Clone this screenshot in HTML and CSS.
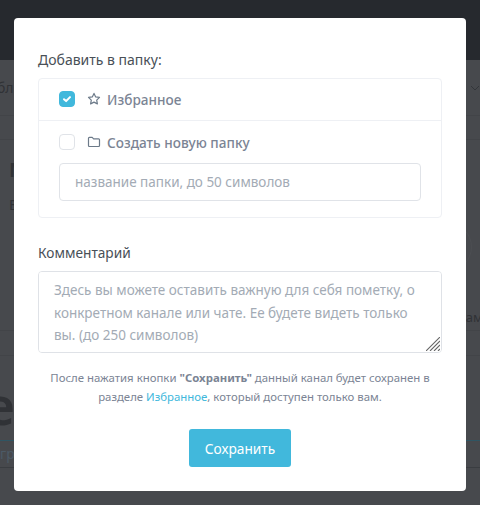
FILE: index.html
```html
<!DOCTYPE html>
<html lang="ru">
<head>
    <meta charset="UTF-8">
    <meta name="viewport" content="width=device-width, initial-scale=1">
    <title>Добавить в папку</title>
    <link rel="stylesheet" href="styles.css">
</head>
<body>
    <!-- Страница под затемнением -->
    <div class="page">
        <div class="page-header"></div>
        <div class="page-tabs">
            <span>бл</span>
            <svg class="page-caret" width="10" height="6" viewBox="0 0 10 6"><path d="M1 1l4 4 4-4" fill="none" stroke="#33363a" stroke-width="1"/></svg>
        </div>
        <div class="page-row"></div>
        <div class="page-title">М</div>
        <div class="page-sub">В</div>
        <div class="page-side"><span>ам</span></div>
        <div class="page-strip"></div>
        <div class="page-big">е</div>
        <div class="page-link">гру</div>
        <div class="page-circle"></div>
    </div>

    <div class="overlay">
        <div class="modal">
            <div class="field-title">Добавить в папку:</div>
            <div class="folder-box">
                <div class="folder-item">
                    <label class="folder-row">
                        <span class="check checked">
                            <svg width="10" height="8" viewBox="0 0 10 8"><path d="M2 4.200l2.100 1.900 3.900-4" fill="none" stroke="#fff" stroke-width="2" stroke-linecap="round" stroke-linejoin="round"/></svg>
                        </span>
                        <svg class="folder-icon" width="14" height="14" viewBox="0 0 14 14"><path d="M7 1.400l1.700 3.500 3.800.5-2.800 2.700.7 3.800L7 10.100l-3.400 1.800.7-3.800-2.800-2.700 3.800-.5z" fill="none" stroke="#6c7a89" stroke-width="1.200" stroke-linejoin="round"/></svg>
                        <span>Избранное</span>
                    </label>
                </div>
                <div class="folder-item new-folder">
                    <label class="folder-row">
                        <span class="check"></span>
                        <svg class="folder-icon" width="14" height="14" viewBox="0 0 14 14"><path d="M1.500 3.200c0-.5.4-.9.9-.9h2.800l1.400 1.500h5c.5 0 .9.4.9.9v5.900c0 .5-.4.9-.9.9H2.400c-.5 0-.9-.4-.9-.9z" fill="none" stroke="#6c7a89" stroke-width="1.200" stroke-linejoin="round"/></svg>
                        <span>Создать новую папку</span>
                    </label>
                    <input class="folder-input" type="text" placeholder="название папки, до 50 символов">
                </div>
            </div>

            <div class="field-title comment-title">Комментарий</div>
            <div class="comment-wrap">
                <textarea class="comment" placeholder="Здесь вы можете оставить важную для себя пометку, о конкретном канале или чате. Ее будете видеть только вы. (до 250 символов)"></textarea>
                <svg class="grip" width="14" height="14" viewBox="0 0 14 14"><path d="M0 14L14 0M4 14L14 4M8 14l6-6M12 14l2-2" fill="none" stroke="#666" stroke-width="1.100"/></svg>
            </div>

            <p class="note">После нажатия кнопки <b>"Сохранить"</b> данный канал будет сохранен в разделе <a href="#">Избранное</a>, который доступен только вам.</p>

            <div class="actions">
                <button type="button">Сохранить</button>
            </div>
        </div>
    </div>
</body>
</html>
```

FILE: styles.css
```css
html, body {
    margin: 0;
    padding: 0;
    height: 100%;
}

body {
    font-family: "Noto Sans", Arial, sans-serif;
    background-color: #47494d;
    overflow: hidden;
}

/* Страница под модальным окном */
.page {
    color: #303236;
}

.page-header {
    height: 60px;
    background-color: #26292e;
}

.page-tabs {
    height: 55px;
    border-bottom: 1px solid #424448;
    display: flex;
    align-items: center;
    justify-content: space-between;
    font-size: 14px;
}

.page-tabs span {
    margin-left: -3px;
}

.page-row {
    height: 23px;
    border-bottom: 1px solid #424448;
}

.page-title {
    margin: 16px 0 0 9px;
    font-size: 20px;
    font-weight: 700;
    line-height: 28px;
}

.page-sub {
    margin: 11px 0 0 9px;
    font-size: 14px;
    line-height: 20px;
}

.page-side {
    margin-top: 92px;
    text-align: right;
    font-size: 13px;
    line-height: 20px;
}

.page-side span {
    margin-right: -3px;
}

.page-strip {
    margin-top: 3px;
    height: 24px;
    border-top: 1px solid #424448;
    border-bottom: 1px solid #424448;
}

.page-big {
    margin-top: 27px;
    margin-left: -15px;
    font-size: 52px;
    font-weight: 600;
    line-height: 44px;
}

.page-link {
    margin-top: 13px;
    height: 26px;
    border-top: 1px solid #2f5563;
    border-bottom: 1px solid #3a3d41;
    color: #4c5a66;
    font-size: 14px;
    line-height: 26px;
    white-space: nowrap;
}

.page-circle {
    position: absolute;
    top: 222px;
    left: 422px;
    width: 48px;
    height: 48px;
    border: 1px solid #4c4e52;
    border-radius: 50%;
}

/* Модальное окно */
.overlay {
    position: absolute;
    top: 0;
    left: 0;
    width: 100%;
    height: 100%;
    padding-top: 18px;
    box-sizing: border-box;
}

.modal {
    width: 452px;
    height: 473px;
    margin: 0 auto;
    padding: 33px 24px 0;
    box-sizing: border-box;
    background-color: #fff;
    border-radius: 4px;
}

.field-title {
    color: #495057;
    font-size: 14px;
    line-height: 18px;
}

.folder-box {
    margin-top: 9px;
    border: 1px solid #eef0f4;
    border-radius: 4px;
}

.folder-item {
    padding: 10px 20px 11px;
}

.new-folder {
    border-top: 1px solid #eef0f4;
    padding-top: 11px;
    padding-bottom: 16px;
}

.folder-row {
    display: flex;
    align-items: center;
    height: 20px;
    color: #7b8494;
    font-size: 13.6px;
    font-weight: 500;
}

.check {
    width: 14px;
    height: 14px;
    margin-right: 12px;
    border: 1px solid #e0e3e8;
    border-radius: 4px;
    display: flex;
    align-items: center;
    justify-content: center;
}

.checked {
    background-color: #41b8dc;
    border-color: #41b8dc;
}

.folder-icon {
    margin-right: 6px;
}

.folder-input {
    display: block;
    width: 100%;
    height: 38px;
    margin-top: 11px;
    padding: 0 15px;
    box-sizing: border-box;
    border: 1px solid #e0e3e8;
    border-radius: 4px;
    font-family: inherit;
    font-size: 13.500px;
    outline: none;
}

.comment-title {
    margin-top: 26px;
    font-size: 13.700px;
}

.comment-wrap {
    position: relative;
    margin-top: 9px;
}

.comment {
    display: block;
    width: 100%;
    height: 82px;
    padding: 7px 15px;
    box-sizing: border-box;
    border: 1px solid #dfe2e7;
    border-radius: 4px;
    font-family: inherit;
    font-size: 13.500px;
    line-height: 22.500px;
    outline: none;
    resize: none;
}

/* Уголок изменения размера поверх поля */
.grip {
    position: absolute;
    right: 2px;
    bottom: 2px;
}

.folder-input::placeholder,
.comment::placeholder {
    color: #a3abb5;
    opacity: 1;
}

.note {
    margin: 15px 0 0;
    color: #7b8494;
    font-size: 11.400px;
    line-height: 19px;
    text-align: center;
}

.note a {
    color: #41b8dc;
    text-decoration: none;
}

.actions {
    margin-top: 23px;
    text-align: center;
}

button {
    width: 102px;
    height: 38px;
    padding: 0;
    background-color: #41b8dc;
    color: #fff;
    border: none;
    border-radius: 3px;
    font-family: inherit;
    font-size: 13.700px;
    cursor: pointer;
}
```
